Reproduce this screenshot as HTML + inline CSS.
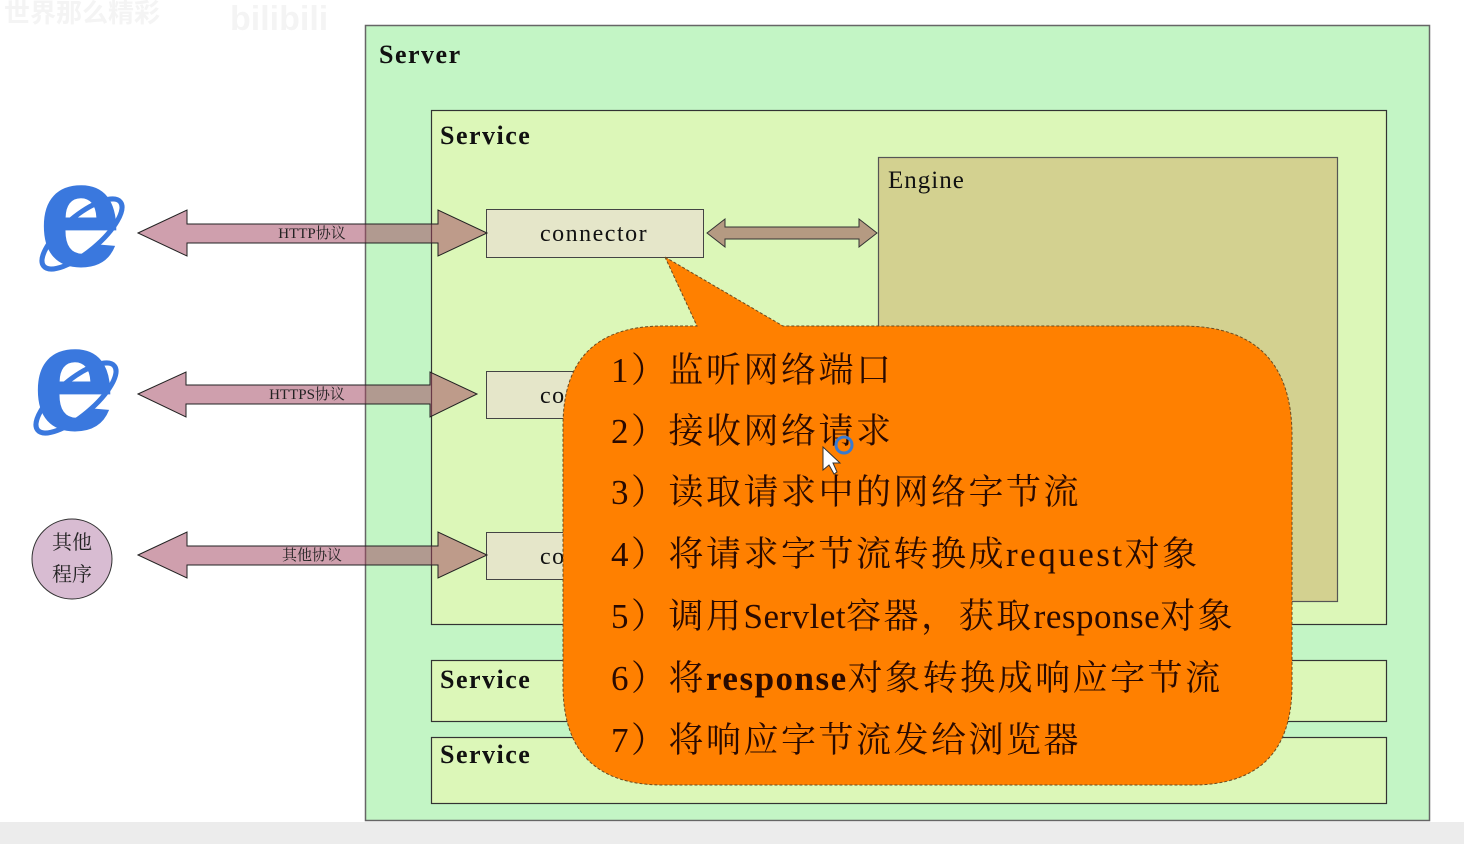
<!DOCTYPE html>
<html><head><meta charset="utf-8"><style>
html,body{margin:0;padding:0;background:#fff;}
svg{display:block}
.s{font-family:"Liberation Serif","Noto Serif CJK SC",serif;}
</style></head><body>
<svg width="1464" height="844" viewBox="0 0 1464 844" xmlns="http://www.w3.org/2000/svg" class="s">
<rect x="0" y="822" width="1464" height="22" fill="#ececec"/>
<text x="4" y="22" font-size="26" fill="#f4f4f4" font-family="Noto Sans CJK SC,sans-serif" font-weight="bold">世界那么精彩</text>
<text x="230" y="30" font-size="34" fill="#f4f4f4" font-family="Liberation Sans,sans-serif" font-weight="bold">bilibili</text>
<rect x="365.5" y="25.5" width="1064" height="795" fill="#c3f5c5" stroke="#666" stroke-width="1.5"/>
<text x="379" y="63" font-size="26" font-weight="bold" letter-spacing="1.5" fill="#111">Server</text>
<rect x="431.5" y="110.5" width="955" height="514" fill="#dcf7b8" stroke="#333" stroke-width="1.2"/>
<text x="440" y="144" font-size="26" font-weight="bold" letter-spacing="1.5" fill="#111">Service</text>
<rect x="431.5" y="660.5" width="955" height="61" fill="#dcf7b8" stroke="#333" stroke-width="1.2"/>
<text x="440" y="688" font-size="26" font-weight="bold" letter-spacing="1.5" fill="#111">Service</text>
<rect x="431.5" y="737.5" width="955" height="66" fill="#dcf7b8" stroke="#333" stroke-width="1.2"/>
<text x="440" y="763" font-size="26" font-weight="bold" letter-spacing="1.5" fill="#111">Service</text>
<rect x="878.5" y="157.5" width="459" height="444" fill="#d3d190" stroke="#555" stroke-width="1.2"/>
<text x="888" y="188" font-size="25" letter-spacing="1" fill="#111">Engine</text>
<rect x="486.5" y="209.5" width="217" height="48" fill="#e5e6c9" stroke="#444" stroke-width="1"/>
<text x="540" y="241" font-size="24" letter-spacing="1.5" fill="#111">connector</text>
<rect x="486.5" y="371.5" width="217" height="47" fill="#e5e6c9" stroke="#444" stroke-width="1"/>
<text x="540" y="403" font-size="24" letter-spacing="1.5" fill="#111">connector</text>
<rect x="486.5" y="532.5" width="217" height="47" fill="#e5e6c9" stroke="#444" stroke-width="1"/>
<text x="540" y="564" font-size="24" letter-spacing="1.5" fill="#111">connector</text>
<path d="M707,233 L725,219 L725,227 L859,227 L859,219 L877,233 L859,247 L859,239 L725,239 L725,247 Z" fill="#b59a82" stroke="#333" stroke-width="1"/>
<g fill="rgba(159,63,91,0.5)" stroke="#222" stroke-width="1">
<path d="M138,233 L187,210 L187,224 L438,224 L438,210 L487,233 L438,256 L438,243 L187,243 L187,256 Z"/>
<path d="M138,394 L186,372 L186,385 L430,385 L430,372 L477,394 L430,417 L430,404 L186,404 L186,417 Z"/>
<path d="M138,555 L187,532 L187,546 L438,546 L438,532 L487,555 L438,578 L438,565 L187,565 L187,578 Z"/>
</g>
<text x="312" y="238" font-size="15" text-anchor="middle" fill="#222">HTTP协议</text>
<text x="307" y="399" font-size="15" text-anchor="middle" fill="#222">HTTPS协议</text>
<text x="312" y="560" font-size="15" text-anchor="middle" fill="#222">其他协议</text>
<g transform="translate(82,234)">
<ellipse cx="0" cy="0" rx="50" ry="18" transform="rotate(-40)" fill="none" stroke="#3a78de" stroke-width="5"/>
<text x="-44" y="32" font-size="150" font-weight="bold" font-family="Liberation Sans,sans-serif" fill="#3a78de">e</text>
</g>
<g transform="translate(76,398)">
<ellipse cx="0" cy="0" rx="50" ry="18" transform="rotate(-40)" fill="none" stroke="#3a78de" stroke-width="5"/>
<text x="-44" y="32" font-size="150" font-weight="bold" font-family="Liberation Sans,sans-serif" fill="#3a78de">e</text>
</g>
<circle cx="72" cy="559" r="40" fill="#d8bcd2" stroke="#333" stroke-width="1"/>
<text x="72" y="549" font-size="20" text-anchor="middle" fill="#222">其他</text>
<text x="72" y="581" font-size="20" text-anchor="middle" fill="#222">程序</text>
<path d="M665,257 L783,326 L1182,326 Q1292,326 1292,436 L1292,685 Q1292,785 1192,785 L663,785 Q563,785 563,685 L563,426 Q563,326 663,326 L697,326 Z" fill="#ff8000" stroke="#6a4a20" stroke-width="1" stroke-dasharray="3,2"/>
<g font-size="35" fill="#2a0a00" letter-spacing="2.5">
<text x="611" y="382">1）监听网络端口</text>
<text x="611" y="443">2）接收网络请求</text>
<text x="611" y="504">3）读取请求中的网络字节流</text>
<text x="611" y="566">4）将请求字节流转换成request对象</text>
<text x="611" y="628">5）调用<tspan letter-spacing="0.5">Servlet</tspan>容器，获取<tspan letter-spacing="0.5">response</tspan>对象</text>
<text x="611" y="690">6）将<tspan font-weight="bold" letter-spacing="1.5">response</tspan>对象转换成响应字节流</text>
<text x="611" y="752">7）将响应字节流发给浏览器</text>
</g>
<circle cx="844" cy="445" r="8" fill="none" stroke="#3a7ad0" stroke-width="3"/>
<path d="M823,447 L823,470 L829,465 L834,474 L837,472 L833,463 L840,463 Z" fill="#fff" stroke="#333" stroke-width="1"/>
</svg>
</body></html>
